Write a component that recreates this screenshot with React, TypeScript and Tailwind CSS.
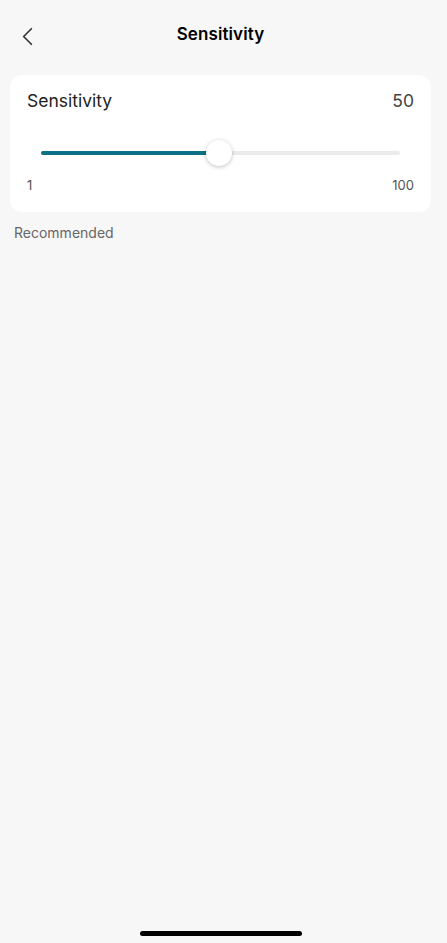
import { ChevronLeft } from 'lucide-react';

const App = () => {
  const value = 50;
  const pct = ((value - 1) / 99) * 100;

  return (
    <div
      className="min-h-screen w-full bg-[#f7f7f7] flex flex-col pr-[6px]"
      style={{ fontFamily: 'Inter, "Noto Sans", sans-serif' }}
    >
      {/* Nav bar */}
      <header className="relative h-[69px] flex items-center justify-center">
        <button className="absolute left-[12px] top-[21px] text-[#333]">
          <ChevronLeft size={31} strokeWidth={1.3} />
        </button>
        <h1 className="text-[17px] font-semibold text-black tracking-[0.1px]">Sensitivity</h1>
      </header>

      <main className="flex-1 px-[10px] pt-[6px]">
        {/* Slider card */}
        <div className="bg-white rounded-[12px] px-[17px] pt-[13px] pb-[16px]">
          <div className="flex items-center justify-between">
            <span className="text-[17.5px] text-[#222]">Sensitivity</span>
            <span className="text-[17.5px] text-[#444]">{value}</span>
          </div>
          <div className="relative mx-[14px] mt-[26px] h-[26px] flex items-center">
            <div className="w-full h-[4px] rounded-full bg-[#ebebeb]" />
            <div
              className="absolute left-0 h-[4px] rounded-full bg-[#0a7186]"
              style={{ width: `${pct}%` }}
            />
            <div
              className="absolute w-[26px] h-[26px] -ml-[13px] rounded-full bg-white shadow-[0_1px_4px_rgba(0,0,0,0.25)]"
              style={{ left: `${pct}%` }}
            />
          </div>
          <div className="flex items-center justify-between mt-[10px] text-[13px] text-[#555]">
            <span>1</span>
            <span>100</span>
          </div>
        </div>

        <p className="mt-[10px] px-[4px] text-[14px] text-[#666]">Recommended</p>
      </main>

      {/* Home indicator */}
      <div className="h-[34px] flex items-start justify-center">
        <div className="mt-[22px] w-[162px] h-[5px] rounded-full bg-black" />
      </div>
    </div>
  );
};

export default App;
